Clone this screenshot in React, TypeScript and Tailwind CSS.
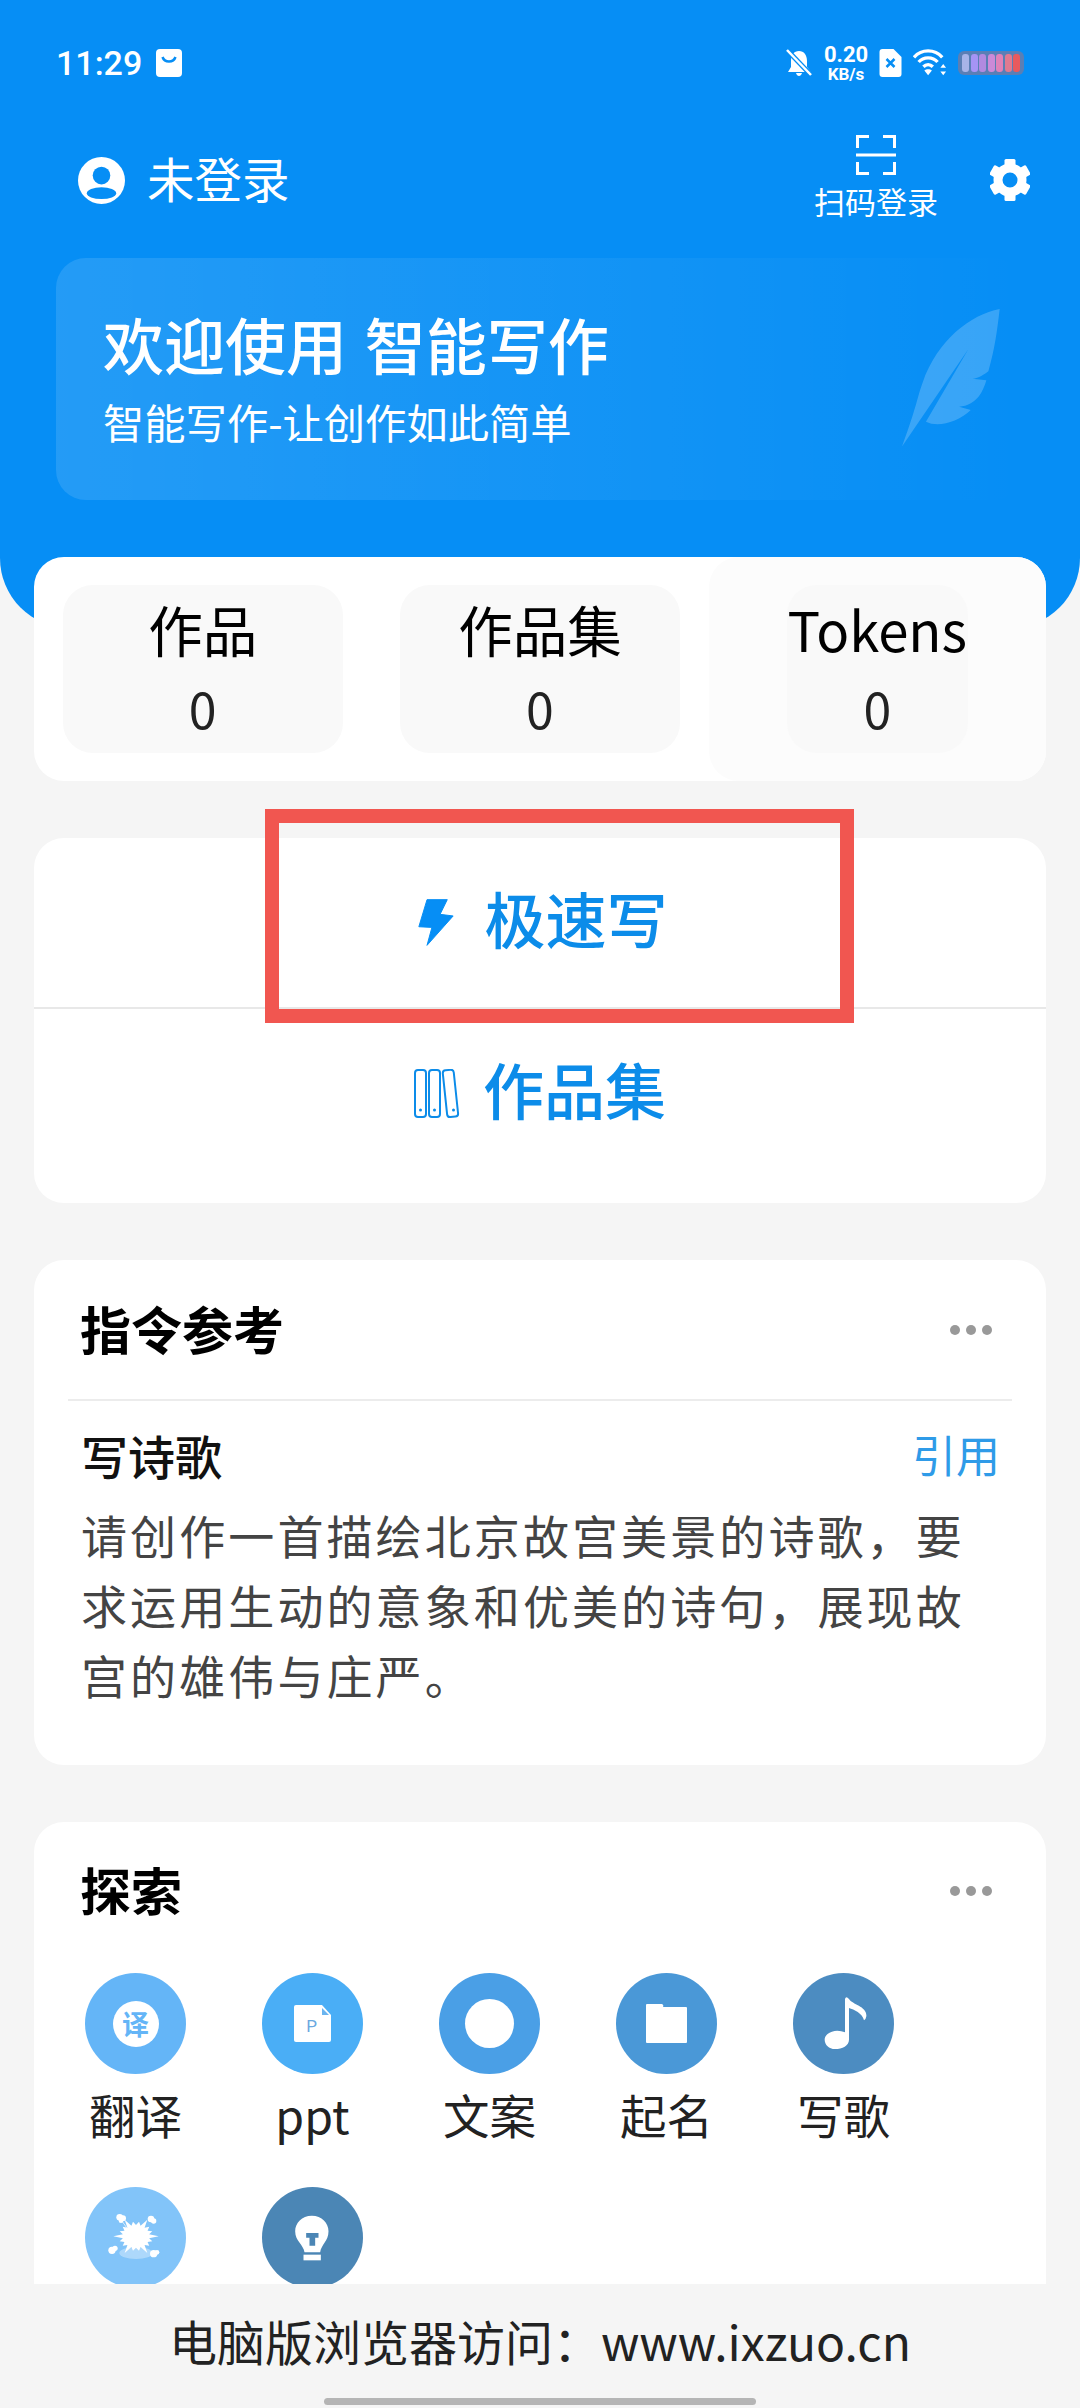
import React from "react";

const tools = [
  { label: "翻译", color: "bg-[#64b5f7]", icon: "translate" },
  { label: "ppt", color: "bg-[#4aaef6]", icon: "ppt" },
  { label: "文案", color: "bg-[#4a9fe6]", icon: "dot" },
  { label: "起名", color: "bg-[#4a98d7]", icon: "folder" },
  { label: "写歌", color: "bg-[#4c8cc1]", icon: "music" },
  // second row is cut by the footer, labels not visible
  { label: "", color: "bg-[#82c4f9]", icon: "burst" },
  { label: "", color: "bg-[#4b86b5]", icon: "bulb" },
];

// spiky blast for the 6th tool
const burstPoints = Array.from({ length: 36 }, (_, i) => {
  const a = (i / 36) * Math.PI * 2;
  const spike = i % 2 === 0 ? (i % 6 === 0 ? 1.7 : 1.3) : 1;
  return `${225 + Math.cos(a) * 40 * spike},${200 + Math.sin(a) * 34 * spike}`;
}).join(" ");

const ToolIcon: React.FC<{ name: string }> = ({ name }) => {
  if (name === "translate") {
    return (
      <div className="flex h-[46px] w-[46px] items-center justify-center rounded-full bg-white text-[27px] leading-none font-bold text-[#64b5f7]">
        译
      </div>
    );
  }
  if (name === "ppt") {
    return (
      <div className="relative flex h-[37px] w-[37px] items-center justify-center pt-[6px] pr-[2px]">
        <svg viewBox="0 0 37 37" className="absolute inset-0 h-full w-full">
          <path d="M2 0h26l9 10v25a2 2 0 0 1-2 2H2a2 2 0 0 1-2-2V2a2 2 0 0 1 2-2z" fill="#fff" />
          <path d="M28 3l7 7h-7z" fill="#6ab4ef" />
        </svg>
        <span className="relative font-['Roboto'] text-[17px] leading-none text-[#6aa8e0]">P</span>
      </div>
    );
  }
  if (name === "dot") return <div className="h-[49px] w-[49px] rounded-full bg-white" />;
  if (name === "folder") {
    return (
      <svg viewBox="0 0 41 39" className="h-[39px] w-[41px]">
        <path d="M1 0h14a2 2 0 0 1 2 3h23a1 1 0 0 1 1 1v34a1 1 0 0 1-1 1H1a1 1 0 0 1-1-1V1a1 1 0 0 1 1-1z" fill="#fff" />
      </svg>
    );
  }
  if (name === "music") {
    return (
      <svg viewBox="655 103 150 180" className="h-[60px] w-[50px]">
        <path
          d="M733 118Q736 108 745 118C755 135 800 140 797 170Q796 178 790 182C785 160 760 150 745 145V240C745 258 725 268 703 268C685 268 672 255 672 240C672 225 690 213 710 213Q722 213 733 218z"
          fill="#fff"
        />
      </svg>
    );
  }
  if (name === "burst") {
    return (
      <svg viewBox="135 130 180 150" className="h-[50px] w-[60px]">
        <ellipse cx="225" cy="250" rx="50" ry="18" fill="#fff" opacity="0.35" />
        <polygon points={burstPoints} fill="#fff" />
        <path d="M180 150l24 34" stroke="#fff" strokeWidth="3" opacity="0.7" />
        <g fill="#fff">
          <circle cx="176" cy="143" r="10" />
          <circle cx="186" cy="146" r="9" />
          <circle cx="180" cy="153" r="7" />
          <circle cx="270" cy="148" r="10" />
          <circle cx="278" cy="154" r="8" />
          <circle cx="153" cy="242" r="11" />
          <circle cx="162" cy="236" r="8" />
          <circle cx="278" cy="252" r="11" />
          <circle cx="288" cy="248" r="7" />
        </g>
      </svg>
    );
  }
  return (
    <svg viewBox="690 130 134 150" className="h-[50px] w-[45px]">
      <path d="M755 138C725 138 705 160 705 185C705 215 730 225 733 248H780C783 225 805 215 805 185C805 160 785 138 755 138z" fill="#fff" />
      <path d="M738 190h37v14h-10v24h-17v-24h-10z" fill="#4b86b5" />
      <rect x="730" y="255" width="52" height="17" fill="#fff" />
    </svg>
  );
};

const Stat: React.FC<{ label: string; wide?: boolean }> = ({ label, wide }) => (
  <div
    className={`flex h-[168px] flex-col items-center rounded-[30px] bg-[#f9f9f9] pt-[13px] ${
      wide ? "w-[280px]" : "w-[181px]"
    }`}
  >
    <div className="h-[62px] text-[54.500px] leading-[62px] whitespace-nowrap text-black">{label}</div>
    <div className="mt-[16px] text-[50px] leading-[62px] text-[#222]">0</div>
  </div>
);

const Dots = () => (
  <div className="flex items-center gap-[6px]">
    <span className="h-[10px] w-[10px] rounded-full bg-[#999]" />
    <span className="h-[10px] w-[10px] rounded-full bg-[#999]" />
    <span className="h-[10px] w-[10px] rounded-full bg-[#999]" />
  </div>
);

const App: React.FC = () => {
  return (
    <div className="flex h-[2408px] w-[1080px] flex-col overflow-hidden bg-[#f5f5f5] font-['Noto_Sans_CJK_SC','Noto_Sans',sans-serif]">
      <div className="flex-1 overflow-hidden">
        <header className="h-[628px] rounded-b-[70px] bg-[#068ef5] px-[56px] text-white">
          {/* status bar */}
          <div className="flex h-[126px] items-center justify-between">
            <div className="flex items-center gap-[13px]">
              <span className="font-['Roboto'] text-[34px] leading-none font-medium">11:29</span>
              <svg viewBox="0 0 28 28" className="h-[28px] w-[28px]">
                <path d="M5 0h18a4 4 0 0 1 4 4v20a4 4 0 0 1-4 4H5a4 4 0 0 1-4-4V4a4 4 0 0 1 4-4z" fill="#fff" />
                <path d="M7.500 8c2 6 11 6 13 0" fill="none" stroke="#068ef5" strokeWidth="2.500" />
              </svg>
            </div>
            <div className="flex items-center">
              <svg viewBox="0 0 26 28" className="h-[28px] w-[26px]">
                <path d="M13 2c5 0 8 4 8 10v6l4 5H2l3-5v-6c0-6 3-10 8-10zM10 24h6c-1 4-5 4-6 0z" fill="#fff" />
                <path d="M1 1l24 25" stroke="#068ef5" strokeWidth="5" />
                <path d="M1 1l24 25" stroke="#fff" strokeWidth="2.500" />
              </svg>
              <div className="ml-[12px] flex w-[44px] flex-col items-center font-['Roboto'] leading-none font-bold">
                <span className="text-[22px] leading-[22px]">0.20</span>
                <span className="text-[17px] leading-[17px]">KB/s</span>
              </div>
              <svg viewBox="0 0 22 28" className="ml-[11px] h-[28px] w-[23px]">
                <path d="M3 0h11l8 8v17a3 3 0 0 1-3 3H3a3 3 0 0 1-3-3V3a3 3 0 0 1 3-3z" fill="#fff" />
                <path d="M7 10l8 8M15 10l-8 8" stroke="#068ef5" strokeWidth="2.500" />
              </svg>
              <svg viewBox="0 0 36 28" className="ml-[11px] h-[28px] w-[34px]">
                <g fill="none" stroke="#fff" strokeWidth="3.500">
                  <path d="M1 8c8-9 22-9 30 0" />
                  <path d="M6 13c5-6 15-6 20 0" />
                  <path d="M11 18c3-3 7-3 10 0" />
                </g>
                <path d="M16 27l-4-5c2-2 6-2 8 0zM32 15l3 4h-6zM32 27l-3-4h6z" fill="#fff" />
              </svg>
              <div className="ml-[11px] flex h-[24px] w-[66px] items-center justify-between rounded-[6px] bg-[#5a7fb5] px-[4px]">
                {["#a7b4e8", "#a594f5", "#b08ae0", "#cb8ad8", "#df82b8", "#e07a90", "#e85a5e"].map((c) => (
                  <span key={c} className="h-[18px] w-[7px] rounded-[3px]" style={{ backgroundColor: c }} />
                ))}
              </div>
            </div>
          </div>

          {/* user row */}
          <div className="flex h-[132px] items-start justify-between">
            <div className="mt-[22px] ml-[22px] flex h-[60px] items-center gap-[22px]">
              <svg viewBox="0 0 48 48" className="mt-[4px] h-[47px] w-[47px]">
                <circle cx="24" cy="24" r="24" fill="#fff" />
                <circle cx="24" cy="19" r="9" fill="#068ef5" />
                <ellipse cx="24" cy="37" rx="15" ry="6" fill="#068ef5" />
              </svg>
              <span className="text-[47.500px] leading-[60px]">未登录</span>
            </div>
            <div className="flex items-start">
              <div className="flex flex-col items-center pt-[9px]">
                <svg viewBox="0 0 40 40" className="h-[40px] w-[40px]">
                  <path
                    d="M1.500 13V1.500H13M27 1.500h11.500V13M1.500 27v11.500H13M38.500 27v11.500H27M0 20h40"
                    fill="none"
                    stroke="#fff"
                    strokeWidth="3"
                  />
                </svg>
                <span className="mt-[6px] text-[31px] leading-[40px]">扫码登录</span>
              </div>
              <svg viewBox="0 0 40 42" className="mt-[33px] ml-[52px] mr-[-6px] h-[42px] w-[40px]">
                <g fill="#fff">
                  {[0, 60, 120, 180, 240, 300].map((r) => (
                    <rect key={r} x="14.500" y="0" width="11" height="12" rx="1.500" transform={`rotate(${r} 20 21)`} />
                  ))}
                </g>
                <circle cx="20" cy="21" r="12" fill="none" stroke="#fff" strokeWidth="9" />
              </svg>
            </div>
          </div>

          {/* banner */}
          <div className="relative h-[242px] rounded-[30px] bg-gradient-to-r from-white/12 to-white/0 pt-[51px] pl-[47px]">
            <div className="text-[61px] leading-[70px] font-medium [word-spacing:4px]">欢迎使用 智能写作</div>
            <div className="mt-[17px] text-[41.300px] leading-[50px]">智能写作-让创作如此简单</div>
            <svg viewBox="133 148 295 415" className="absolute top-[51px] right-[24px] h-[138px] w-[98px]">
              <path
                d="M427 148C340 165 240 240 195 370C180 410 178 440 133 562L333 268L205 487C240 505 300 490 340 452L305 442C330 440 350 430 365 410C375 395 382 380 387 362L345 358C365 355 380 345 393 335C412 270 420 210 427 148z"
                fill="#fff"
                opacity="0.2"
              />
            </svg>
          </div>
        </header>

        <main className="relative mt-[-71px] flex flex-col gap-[57px] px-[34px]">
          {/* stats */}
          <section className="grid h-[224px] grid-cols-3 rounded-[30px] bg-white">
            <div className="flex items-start justify-center pt-[28px]">
              <Stat label="作品" wide />
            </div>
            <div className="flex items-start justify-center pt-[28px]">
              <Stat label="作品集" wide />
            </div>
            <div className="flex items-start justify-center rounded-[30px] bg-[#fcfcfc] pt-[28px]">
              <Stat label="Tokens" />
            </div>
          </section>

          {/* main actions */}
          <section className="relative h-[365px] rounded-[30px] bg-white">
            <button className="flex h-[169px] w-full items-center justify-center pl-[5px] text-[61px] leading-none font-medium text-[#0c8ce9]">
              <svg viewBox="120 110 115 150" className="mr-[29px] h-[49px] w-[38px]">
                <path d="M150 115h62l-22 45 40 5-80 90 15-55-40-2z" fill="#068ef5" stroke="#068ef5" strokeWidth="3" strokeLinejoin="round" />
              </svg>
              <span className="mt-[-10px]">极速写</span>
            </button>
            <div className="h-[2px] bg-[#e8e8e8]" />
            <button className="flex h-[169px] w-full items-center justify-center text-[61px] leading-none font-medium text-[#0c8ce9]">
              <svg viewBox="0 0 48 50" className="mr-[21px] h-[50px] w-[48px]">
                <g fill="none" stroke="#0c8ce9" strokeWidth="2">
                  <rect x="1" y="1" width="11" height="47" rx="3" />
                  <rect x="15" y="1" width="11" height="47" rx="3" />
                  <rect x="31" y="1" width="11" height="47" rx="3" transform="rotate(-6 36 25)" />
                </g>
                <g fill="#0c8ce9">
                  <circle cx="6.500" cy="41" r="1.500" />
                  <circle cx="20.500" cy="41" r="1.500" />
                  <circle cx="39.500" cy="41" r="1.500" />
                </g>
              </svg>
              <span className="mt-[-10px]">作品集</span>
            </button>
            <div className="absolute top-[-29px] left-[231px] h-[214px] w-[589px] border-[14px] border-[#f15650]" />
          </section>

          {/* prompt reference */}
          <section className="h-[505px] rounded-[30px] bg-white">
            <div className="mx-[34px] flex h-[141px] items-center justify-between border-b-2 border-[#ececec] pr-[20px] pl-[12px]">
              <h2 className="mt-[-3px] text-[51px] leading-none font-bold text-black">指令参考</h2>
              <Dots />
            </div>
            <div className="px-[47px] pt-[21px]">
              <div className="flex h-[64px] items-center justify-between">
                <span className="text-[47px] leading-none font-medium text-[#111]">写诗歌</span>
                <span className="mr-[-1px] text-[44px] leading-none text-[#2f9be8]">引用</span>
              </div>
              <p className="mt-[13px] text-[46px] leading-[70px] tracking-[3.100px] text-[#444]">
                请创作一首描绘北京故宫美景的诗歌，要求运用生动的意象和优美的诗句，展现故宫的雄伟与庄严。
              </p>
            </div>
          </section>

          {/* explore */}
          <section className="h-[600px] rounded-[30px] bg-white">
            <div className="flex h-[138px] items-center justify-between pr-[54px] pl-[46px]">
              <h2 className="mt-[-3px] text-[51px] leading-none font-bold text-black">探索</h2>
              <Dots />
            </div>
            <div className="mt-[13px] grid grid-cols-[repeat(5,177px)] pl-[13px]">
              {tools.map((t) => (
                <div key={t.icon} className="flex h-[214px] flex-col items-center">
                  <div className={`flex h-[101px] w-[101px] items-center justify-center rounded-full ${t.color}`}>
                    <ToolIcon name={t.icon} />
                  </div>
                  {t.label && <span className="mt-[11px] text-[46.500px] leading-[58px] text-[#222]">{t.label}</span>}
                </div>
              ))}
            </div>
          </section>
        </main>
      </div>

      <footer className="relative h-[124px] shrink-0 bg-[#f5f5f5]">
        <div className="h-[114px] text-center text-[48px] leading-[112px] text-[#222]">
          电脑版浏览器访问：www.ixzuo.cn
        </div>
        <div className="mx-auto h-[7px] w-[432px] rounded-full bg-[#b5b5b5]" />
      </footer>
    </div>
  );
};

export default App;
